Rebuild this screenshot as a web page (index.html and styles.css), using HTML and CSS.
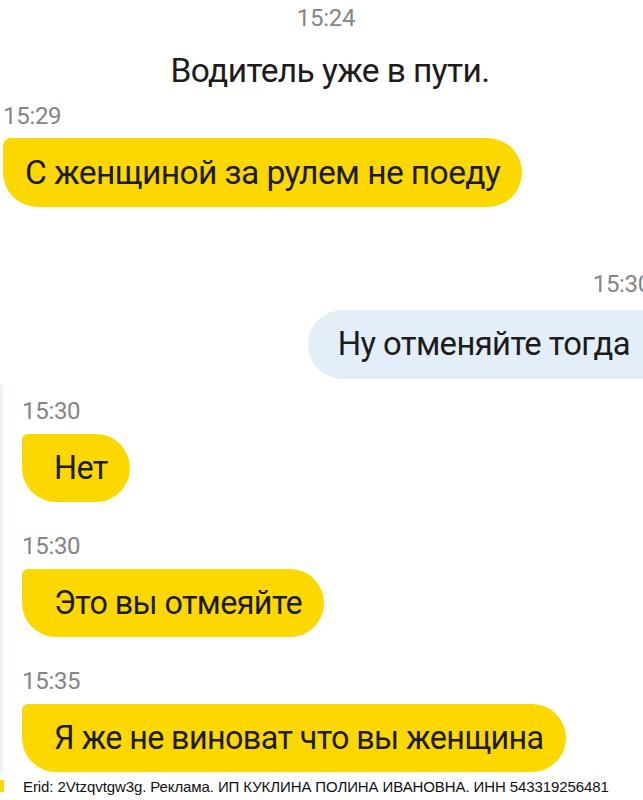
FILE: index.html
```html
<!DOCTYPE html>
<html lang="ru">
<head>
  <meta charset="UTF-8" />
  <meta name="viewport" content="width=device-width, initial-scale=1.0"/>
  <title>Чат с водителем</title>
  <link rel="stylesheet" href="styles.css">
</head>
<body>

  <!-- верхняя часть переписки -->
  <div class="chat chat-top">
    <div class="time time-center">15:24</div>
    <div class="system">Водитель уже в пути.</div>

    <div class="time">15:29</div>
    <div class="bubble in">С женщиной за рулем не поеду</div>

    <div class="time time-right">15:30</div>
    <div class="bubble out">Ну отменяйте тогда</div>
  </div>

  <!-- нижняя часть, второй скриншот -->
  <div class="chat chat-bottom">
    <div class="time">15:30</div>
    <div class="bubble in">Нет</div>

    <div class="time">15:30</div>
    <div class="bubble in">Это вы отмеяйте</div>

    <div class="time">15:35</div>
    <div class="bubble in last">Я же не виноват что вы женщина</div>
  </div>

  <div class="ad-line">
    <span class="ad-mark"></span>
    Erid: 2Vtzqvtgw3g. Реклама. ИП КУКЛИНА ПОЛИНА ИВАНОВНА. ИНН 543319256481
  </div>

</body>
</html>
```

FILE: styles.css
```css
body {
  margin: 0;
  padding: 0;
  width: 643px;
  height: 800px;
  overflow: hidden;
  background: #fff;
  font-family: Roboto, 'Noto Sans', sans-serif;
  color: #1c1c1c;
  position: relative;
}

.chat {
  display: flex;
  flex-direction: column;
  align-items: flex-start;
}

.chat-top {
  padding: 4px 0 0 3px;
  height: 385px;
  box-sizing: border-box;
}

.chat-bottom {
  border-left: 3px solid #edf2f6;
  padding-left: 19px;
  padding-top: 12px;
}

.time {
  font-size: 24px;
  line-height: 28px;
  color: #858585;
  letter-spacing: -0.3px;
}

.time-center {
  align-self: center;
  margin-left: 6px;
}

.time-right {
  align-self: flex-end;
  margin-right: -8px;
  margin-top: 63px;
}

.system {
  align-self: center;
  font-size: 33.5px;
  line-height: 40px;
  margin: 19px 0 11px 14px;
  letter-spacing: -0.6px;
}

.bubble {
  font-size: 33.6px;
  line-height: 69px;
  height: 69px;
  padding: 0 22px;
  border-radius: 8px 35px 35px 35px;
  letter-spacing: -0.6px;
  white-space: nowrap;
  margin-top: 8px;
}

.in {
  background: #fdd800;
}

.chat-bottom .in {
  font-size: 32.3px;
  height: 68px;
  line-height: 68px;
  padding: 0 22px 0 32px;
  margin-top: 9px;
  margin-bottom: 30px;
  border-radius: 6px 34px 34px 34px;
}

.out {
  background: #e3eef9;
  font-size: 32.8px;
  align-self: flex-end;
  margin-top: 12px;
  margin-right: -40px;
  padding: 0 53px 0 30px;
  border-radius: 35px 8px 8px 35px;
}

.chat-bottom .last {
  margin-bottom: 0;
}

.ad-line {
  position: absolute;
  left: 0;
  bottom: 0;
  width: 100%;
  height: 27px;
  background: #fff;
  font-family: 'Liberation Sans', Arial, sans-serif;
  font-size: 15px;
  line-height: 27px;
  color: #111;
  padding-left: 23px;
  box-sizing: border-box;
  letter-spacing: -0.1px;
  white-space: nowrap;
}

.ad-mark {
  position: absolute;
  left: 0;
  top: 7px;
  width: 4px;
  height: 12px;
  background: #fdd800;
}
```
